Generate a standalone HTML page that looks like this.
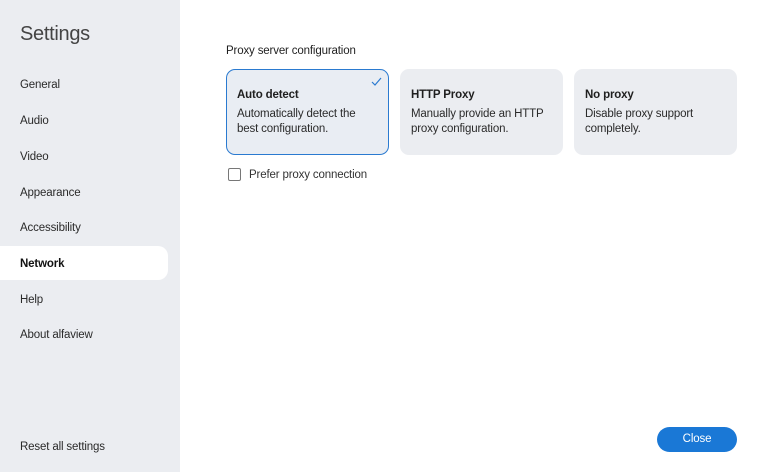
<!DOCTYPE html>
<html><head><meta charset="utf-8"><style>
*{margin:0;padding:0;box-sizing:border-box}
body{width:780px;height:472px;background:#fff;font-family:"Liberation Sans",sans-serif;color:#1f1f1f;position:relative;overflow:hidden;letter-spacing:-0.15px}
.side{position:absolute;left:0;top:0;width:180px;height:472px;background:#ebedf1}
.title{position:absolute;left:20px;top:23px;font-size:20px;color:#444;letter-spacing:-0.3px}
.item{position:absolute;left:20px;font-size:11.5px;color:#2a2a2a}
.sel{position:absolute;left:0;top:246px;width:168px;height:34px;background:#fff;border-radius:0 10px 10px 0}
.lbl{position:absolute;left:226px;top:45px;font-size:11.5px}
.card{position:absolute;top:69px;width:163px;height:86px;background:#ebedf1;border-radius:9px;padding:20px 10px 0 11px;white-space:nowrap}
.card b{display:block;font-size:11.5px;margin-bottom:6px}
.card p{font-size:11.5px;line-height:15px;color:#2a2a2a}
.card.on{border:1.5px solid #2a7ad0;background:#e9edf3;padding:19px 9px 0 10px}
.cb{position:absolute;left:228px;top:168px;width:13px;height:13px;border:1.3px solid #777;border-radius:2px}
.cbl{position:absolute;left:249px;top:169px;font-size:11.5px;color:#333}
.btn{position:absolute;left:657px;top:427px;width:80px;height:25px;border-radius:13px;background:#1a78d6;color:#fff;font-size:11.5px;text-align:center;line-height:25px}
</style></head><body>
<div class="side">
<div class="title">Settings</div>
<div class="sel"></div>
<div class="item" style="top:79px">General</div>
<div class="item" style="top:115px">Audio</div>
<div class="item" style="top:151px">Video</div>
<div class="item" style="top:187px">Appearance</div>
<div class="item" style="top:222px">Accessibility</div>
<div class="item" style="top:258px;font-weight:bold;color:#111">Network</div>
<div class="item" style="top:294px">Help</div>
<div class="item" style="top:329px">About alfaview</div>
<div class="item" style="top:441px">Reset all settings</div>
</div>
<div class="lbl">Proxy server configuration</div>
<div class="card on" style="left:226px"><b>Auto detect</b><p>Automatically detect the<br>best configuration.</p>
<svg style="position:absolute;right:6px;top:7px" width="11" height="9" viewBox="0 0 11 9"><path d="M1 5l3 3 6-7" fill="none" stroke="#2a7ad0" stroke-width="1.2"/></svg></div>
<div class="card" style="left:400px"><b>HTTP Proxy</b><p>Manually provide an HTTP<br>proxy configuration.</p></div>
<div class="card" style="left:574px"><b>No proxy</b><p>Disable proxy support<br>completely.</p></div>
<div class="cb"></div><div class="cbl">Prefer proxy connection</div>
<div class="btn">Close</div>
</body></html>
